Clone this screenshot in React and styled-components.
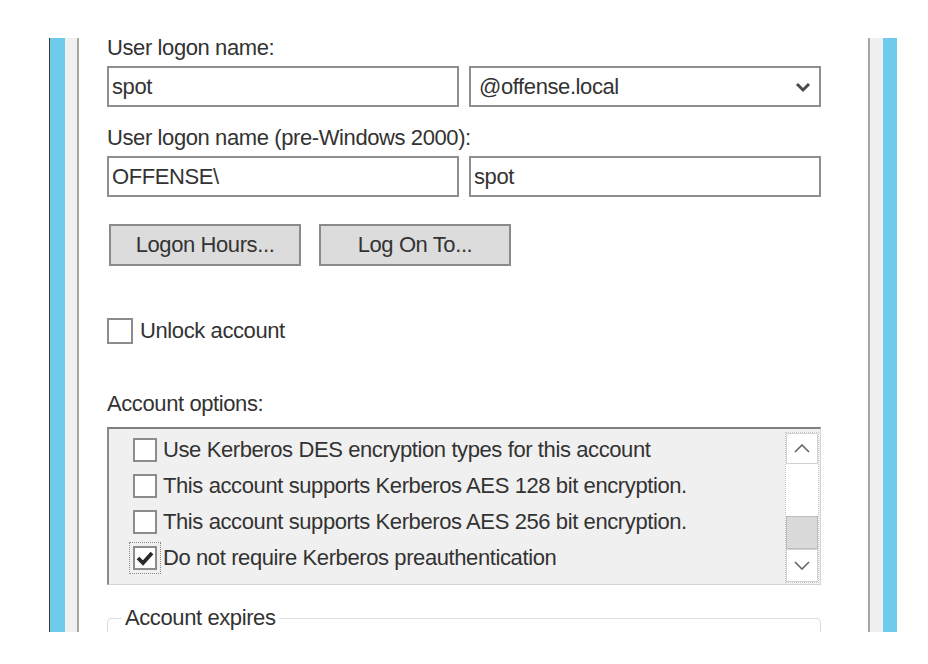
import React from "react";
import styled, { createGlobalStyle } from "styled-components";

const Global = createGlobalStyle`
  html, body { margin: 0; padding: 0; background: #ffffff; }
  body {
    font-family: "Liberation Sans", Arial, sans-serif;
    color: #333333;
  }
  * { box-sizing: border-box; }
`;

const Page = styled.div`
  width: 928px;
  height: 664px;
  padding: 38px 0 0 49px;
  background: #ffffff;
`;

const Frame = styled.div`
  display: flex;
  width: 848px;
  height: 594px;
  overflow: hidden;
`;

const Rail = styled.div`
  display: flex;
  flex: none;
  height: 100%;
`;

const Stripe = styled.div`
  width: ${(p) => p.$w}px;
  height: 100%;
  background: ${(p) => p.$c};
`;

const Content = styled.div`
  flex: 1;
  display: flex;
  flex-direction: column;
  padding: 0 47px 0 28px;
  background: #ffffff;
  font-size: 22px;
  letter-spacing: -0.4px;
  color: #333333;
  & > * { flex-shrink: 0; }
`;

const Label = styled.div`
  height: 20px;
  line-height: 20px;
  margin-top: ${(p) => p.$mt}px;
  white-space: nowrap;
`;

const FieldRow = styled.div`
  display: flex;
  gap: 10px;
  margin-top: ${(p) => p.$mt}px;
`;

const TextBox = styled.div`
  position: relative;
  display: flex;
  align-items: center;
  width: 352px;
  height: 41px;
  border: 2px solid #8e8e8e;
  background: #ffffff;
  padding-left: ${(p) => p.$pad || 3}px;
  white-space: nowrap;
`;

const ComboArrow = styled.svg`
  position: absolute;
  right: 8px;
  top: 14px;
`;

const ButtonRow = styled.div`
  display: flex;
  gap: 18px;
  margin-top: 27px;
  padding-left: 2px;
`;

const PushButton = styled.div`
  display: flex;
  align-items: center;
  justify-content: center;
  width: 192px;
  height: 42px;
  border: 2px solid #8a8a8a;
  background: #dcdcdc;
  white-space: nowrap;
`;

const CheckRow = styled.div`
  display: flex;
  align-items: center;
  gap: ${(p) => p.$gap}px;
  height: ${(p) => p.$h}px;
  margin-top: ${(p) => p.$mt || 0}px;
  white-space: nowrap;
  flex-shrink: 0;
`;

const Box = styled.div`
  flex: none;
  display: flex;
  align-items: center;
  justify-content: center;
  width: ${(p) => p.$size}px;
  height: ${(p) => p.$size}px;
  border: 2px solid #8c8c8c;
  background: #ffffff;
  outline: ${(p) => (p.$focus ? "1px dotted #8a8a8a" : "none")};
  outline-offset: 3px;
`;

const ListBox = styled.div`
  display: flex;
  height: 158px;
  margin-top: 13px;
  border-top: 2px solid #7e7e7e;
  border-left: 2px solid #8a8a8a;
  border-right: 1px solid #d4d4d4;
  border-bottom: 1px solid #d4d4d4;
  background: #f0f0f0;
`;

const Items = styled.div`
  flex: 1;
  display: flex;
  flex-direction: column;
  padding: 3px 0 0 24px;
`;

const ScrollBar = styled.div`
  flex: none;
  display: flex;
  flex-direction: column;
  width: 34px;
  margin: 3px 1px 1px 0;
  border: 1px dotted #c4c4c4;
  background: #ffffff;
`;

const ScrollButton = styled.div`
  flex: none;
  display: flex;
  align-items: center;
  justify-content: center;
  height: ${(p) => p.$h}px;
  background: #ffffff;
  border: 1px solid #d2d2d2;
`;

const Track = styled.div`
  flex: 1;
  background: #ffffff;
`;

const Thumb = styled.div`
  flex: none;
  height: 33px;
  background: #dadada;
  border: 1px solid #bdbdbd;
`;

const GroupBox = styled.fieldset`
  margin: 23px 0 0 0;
  padding: 0 14px;
  height: 120px;
  border: 1px solid #dcdcdc;
  border-radius: 4px;
  flex: none;
`;

const Legend = styled.legend`
  padding: 0 3px;
  line-height: 20px;
  font-size: 22px;
  white-space: nowrap;
`;

const Chevron = ({ up, w = 16, h = 9, stroke = "#666", sw = 1.6 }) => (
  <svg width={w} height={h} viewBox={`0 0 ${w} ${h}`}>
    <polyline
      points={
        up
          ? `1,${h - 1} ${w / 2},1 ${w - 1},${h - 1}`
          : `1,1 ${w / 2},${h - 1} ${w - 1},1`
      }
      fill="none"
      stroke={stroke}
      strokeWidth={sw}
    />
  </svg>
);

const Check = () => (
  <svg width="18" height="16" viewBox="0 0 18 16">
    <polyline
      points="2,8 7,13 16,3"
      fill="none"
      stroke="#2a2a2a"
      strokeWidth="3.8"
    />
  </svg>
);

const options = [
  { text: "Use Kerberos DES encryption types for this account", checked: false },
  { text: "This account supports Kerberos AES 128 bit encryption.", checked: false },
  { text: "This account supports Kerberos AES 256 bit encryption.", checked: false },
  { text: "Do not require Kerberos preauthentication", checked: true },
];

export default function App() {
  return (
    <>
      <Global />
      <Page>
        <Frame>
          <Rail>
            <Stripe $w={1} $c="#3a3a3a" />
            <Stripe $w={15} $c="#6ecbeb" />
            <Stripe $w={12} $c="#f0f0f0" />
            <Stripe $w={2} $c="#a6a6a6" />
          </Rail>
          <Content>
            <Label $mt={0}>User logon name:</Label>
            <FieldRow $mt={8}>
              <TextBox>spot</TextBox>
              <TextBox $pad={8}>
                @offense.local
                <ComboArrow width="16" height="11" viewBox="0 0 16 11">
                  <polyline
                    points="2,2 8,8 14,2"
                    fill="none"
                    stroke="#4a4a52"
                    strokeWidth="3"
                  />
                </ComboArrow>
              </TextBox>
            </FieldRow>
            <Label $mt={21}>User logon name (pre-Windows 2000):</Label>
            <FieldRow $mt={8}>
              <TextBox>OFFENSE\</TextBox>
              <TextBox>spot</TextBox>
            </FieldRow>
            <ButtonRow>
              <PushButton>Logon Hours...</PushButton>
              <PushButton>Log On To...</PushButton>
            </ButtonRow>
            <CheckRow $gap={7} $h={25} $mt={52}>
              <Box $size={26} />
              Unlock account
            </CheckRow>
            <Label $mt={51}>Account options:</Label>
            <ListBox>
              <Items>
                {options.map((o) => (
                  <CheckRow key={o.text} $gap={6} $h={36}>
                    <Box $size={24} $focus={o.checked}>
                      {o.checked && <Check />}
                    </Box>
                    {o.text}
                  </CheckRow>
                ))}
              </Items>
              <ScrollBar>
                <ScrollButton $h={31}>
                  <Chevron up />
                </ScrollButton>
                <Track />
                <Thumb />
                <ScrollButton $h={33}>
                  <Chevron />
                </ScrollButton>
              </ScrollBar>
            </ListBox>
            <GroupBox>
              <Legend>Account expires</Legend>
            </GroupBox>
          </Content>
          <Rail>
            <Stripe $w={2} $c="#a6a6a6" />
            <Stripe $w={13} $c="#f0f0f0" />
            <Stripe $w={14} $c="#6ecbeb" />
          </Rail>
        </Frame>
      </Page>
    </>
  );
}
